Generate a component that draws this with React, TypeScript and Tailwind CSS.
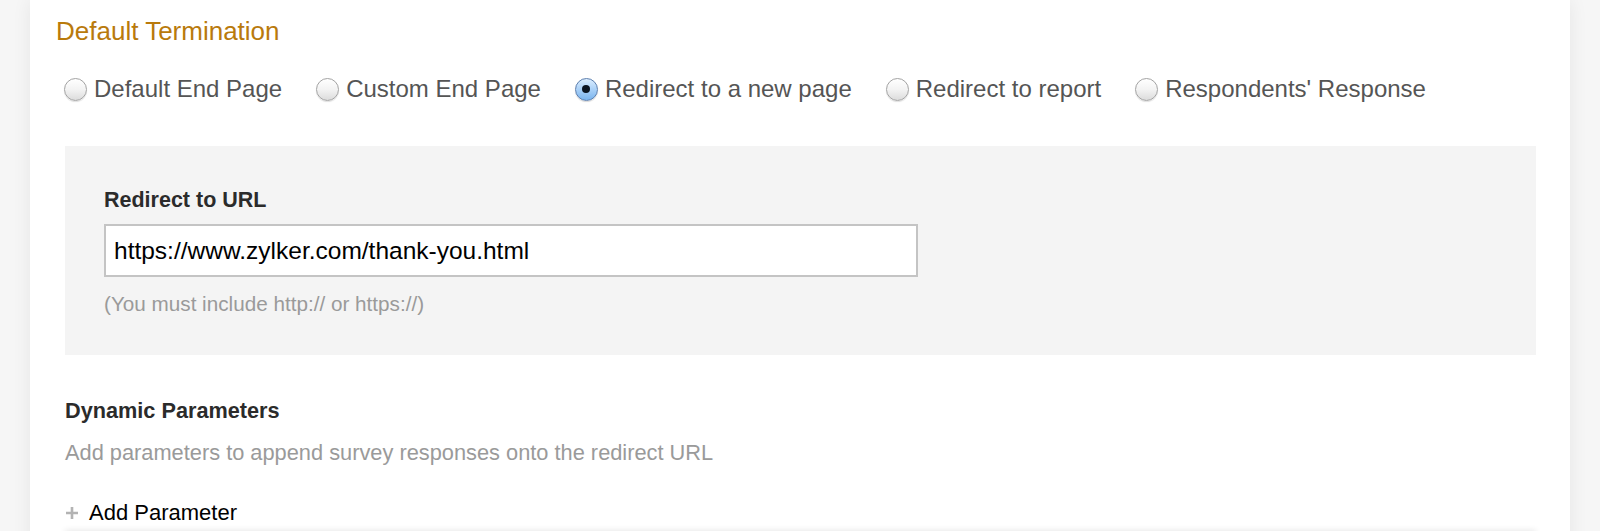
import React, { useState } from 'react';

const OPTIONS = [
  'Default End Page',
  'Custom End Page',
  'Redirect to a new page',
  'Redirect to report',
  "Respondents' Response",
];

function Radio({ checked }: { checked: boolean }) {
  if (checked) {
    return (
      <span className="flex h-[23px] w-[23px] shrink-0 items-center justify-center rounded-full border border-[#5d7fae] bg-gradient-to-b from-[#dceeff] via-[#a9d0f7] to-[#79b4ee] shadow-[0_1px_1px_rgba(0,0,0,0.15)]">
        <span className="h-[8px] w-[8px] rounded-full bg-[#0b1522]" />
      </span>
    );
  }
  return (
    <span className="h-[23px] w-[23px] shrink-0 rounded-full border border-[#a3a3a3] bg-gradient-to-b from-white via-[#f3f3f3] to-[#dcdcdc] shadow-[0_1px_1px_rgba(0,0,0,0.12)]" />
  );
}

export default function App() {
  const [selected, setSelected] = useState(2);
  const [url, setUrl] = useState('https://www.zylker.com/thank-you.html');

  return (
    <div
      className="min-h-[531px] bg-[#f6f6f6] px-[30px]"
      style={{ fontFamily: '"Liberation Sans", Arial, Helvetica, sans-serif' }}
    >
      <div className="min-h-[531px] bg-white pl-[35px] pr-[34px] pt-[15px] shadow-[0_0_18px_rgba(0,0,0,0.07)]">
        {/* Title */}
        <h1 className="-ml-[9px] text-[26px] leading-[32px] text-[#b97a0c]">Default Termination</h1>

        {/* Radio options */}
        <div className="-ml-[1px] mt-[28px] flex items-center gap-[34px]">
          {OPTIONS.map((label, i) => (
            <label
              key={label}
              onClick={() => setSelected(i)}
              className="flex cursor-pointer items-center gap-[7px] text-[24px] leading-[28px] text-[#555]"
            >
              <Radio checked={selected === i} />
              {label}
            </label>
          ))}
        </div>

        {/* Redirect box */}
        <div className="mt-[43px] h-[209px] bg-[#f4f4f4] pl-[39px] pt-[41px]">
          <p className="text-[21.5px] font-bold leading-[26px] text-[#2b2b2b]">Redirect to URL</p>
          <input
            value={url}
            onChange={(e) => setUrl(e.target.value)}
            className="mt-[11px] block h-[53px] w-[814px] border-2 border-[#c4c4c4] bg-white px-[8px] text-[24.5px] text-black outline-none"
          />
          <p className="mt-[14px] text-[20.7px] leading-[26px] text-[#9a9a9a]">(You must include http:// or https://)</p>
        </div>

        {/* Dynamic parameters */}
        <p className="mt-[43px] text-[21.7px] font-bold leading-[26px] text-[#2b2b2b]">Dynamic Parameters</p>
        <p className="mt-[16px] text-[21.8px] leading-[26px] text-[#9a9a9a]">
          Add parameters to append survey responses onto the redirect URL
        </p>

        <button className="mt-[34px] flex items-center gap-[10px] text-[22px] leading-[26px] text-black">
          <svg width="14" height="14" viewBox="0 0 14 14" className="text-[#b3b3b3]">
            <path d="M7 1v12M1 7h12" stroke="currentColor" strokeWidth="2.6" />
          </svg>
          Add Parameter
        </button>

        <div className="mt-[7px] h-[40px] bg-white shadow-[0_-3px_6px_rgba(0,0,0,0.09)]" />
      </div>
    </div>
  );
}
